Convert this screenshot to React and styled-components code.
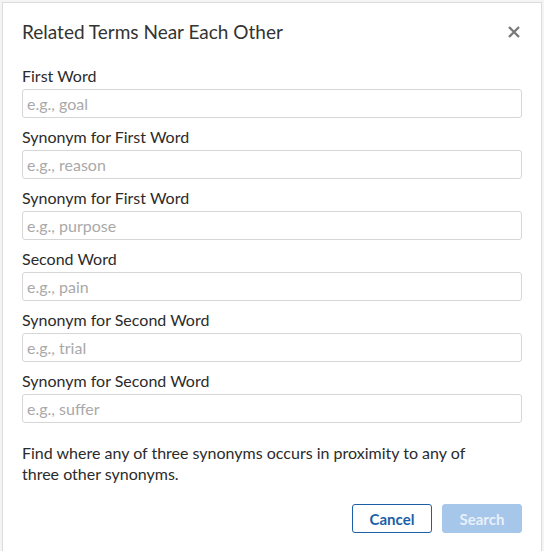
import React from 'react';
import styled, { createGlobalStyle } from 'styled-components';

const GlobalStyle = createGlobalStyle`
  html, body {
    margin: 0;
    padding: 0;
    background: #f4f4f4;
    font-family: Lato, "Open Sans", sans-serif;
  }
`;

const Dialog = styled.div`
  box-sizing: border-box;
  width: 540px;
  min-height: 560px;
  margin: 2px 0 0 2px;
  padding: 15px 19px 16px 19px;
  background: #fff;
  border: 1px solid #dcdcdc;
  color: #333;
`;

const Header = styled.div`
  display: flex;
  align-items: center;
  justify-content: space-between;
  height: 28px;
  margin-bottom: 19px;
`;

const Title = styled.h2`
  margin: 0;
  font-size: 19px;
  font-weight: 400;
  line-height: 28px;
  color: #333;
`;

const Close = styled.button`
  border: none;
  background: none;
  padding: 0;
  width: 16px;
  height: 16px;
  display: flex;
  align-items: center;
  justify-content: center;
  cursor: pointer;
`;

const Field = styled.div`
  display: flex;
  flex-direction: column;
  margin-bottom: 8px;
`;

const Label = styled.label`
  font-size: 16px;
  line-height: 22px;
  margin-bottom: 2px;
  color: #2b2b2b;
`;

const Input = styled.input`
  box-sizing: border-box;
  height: 29px;
  width: 100%;
  padding: 0 4px;
  border: 1px solid #d6d6d6;
  border-radius: 3px;
  font-family: inherit;
  font-size: 16px;
  color: #333;
  outline: none;

  &::placeholder {
    color: #a9a9a9;
  }
`;

const Description = styled.p`
  max-width: 470px;
  margin: 19px 0 20px;
  font-size: 16px;
  line-height: 21px;
  color: #2b2b2b;
`;

const Actions = styled.div`
  display: flex;
  justify-content: flex-end;
  gap: 10px;
`;

const Button = styled.button`
  box-sizing: border-box;
  width: 80px;
  height: 29px;
  border-radius: 3px;
  font-family: inherit;
  font-size: 15px;
  font-weight: 700;
  cursor: pointer;
  border: 1px solid ${p => (p.$primary ? '#a6c6ea' : '#1b5fa6')};
  background: ${p => (p.$primary ? '#a6c6ea' : '#fff')};
  color: ${p => (p.$primary ? '#e8f0fa' : '#1b5fa6')};
`;

const fields = [
  ['First Word', 'e.g., goal'],
  ['Synonym for First Word', 'e.g., reason'],
  ['Synonym for First Word', 'e.g., purpose'],
  ['Second Word', 'e.g., pain'],
  ['Synonym for Second Word', 'e.g., trial'],
  ['Synonym for Second Word', 'e.g., suffer'],
];

export default function App() {
  return (
    <>
      <GlobalStyle />
      <Dialog>
        <Header>
          <Title>Related Terms Near Each Other</Title>
          <Close aria-label="Close">
            <svg width="12" height="12" viewBox="0 0 12 12">
              <path d="M1 1L11 11M11 1L1 11" stroke="#7a7a7a" strokeWidth="2.4" />
            </svg>
          </Close>
        </Header>
        {fields.map(([label, ph], i) => (
          <Field key={i}>
            <Label>{label}</Label>
            <Input placeholder={ph} />
          </Field>
        ))}
        <Description>
          Find where any of three synonyms occurs in proximity to any of three other synonyms.
        </Description>
        <Actions>
          <Button>Cancel</Button>
          <Button $primary>Search</Button>
        </Actions>
      </Dialog>
    </>
  );
}
